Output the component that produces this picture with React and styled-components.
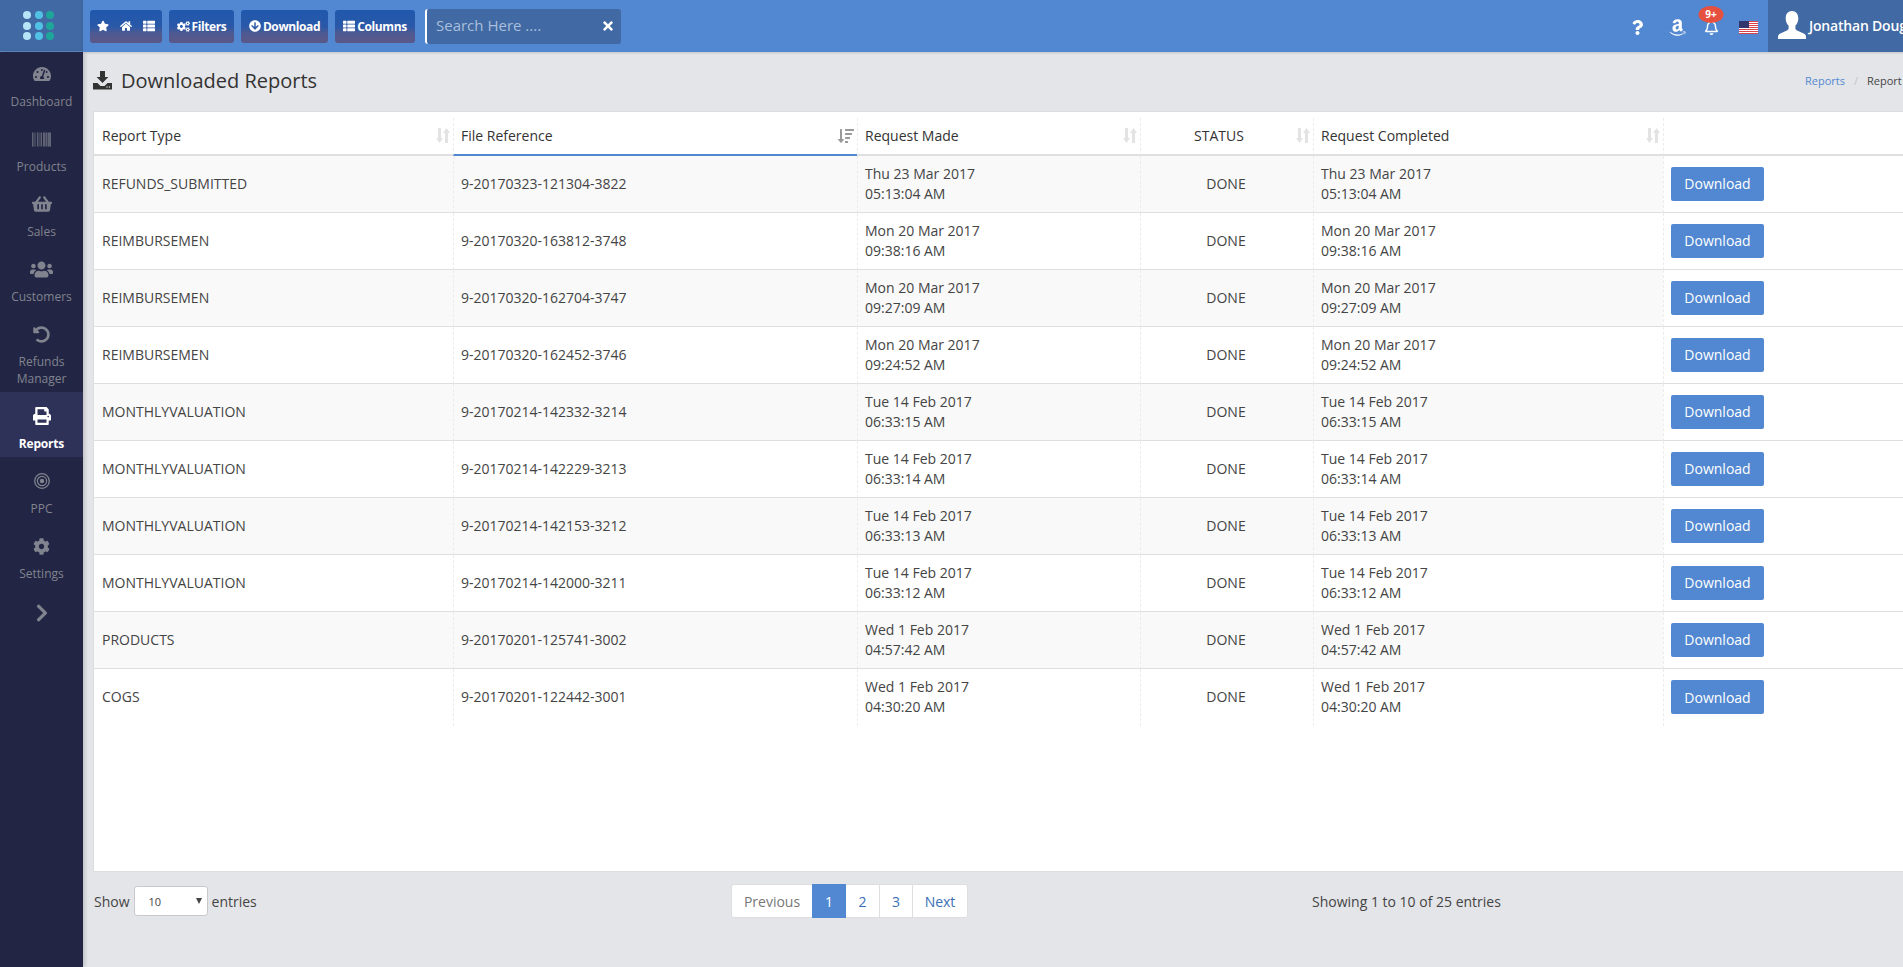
import React from "react";
import styled, { createGlobalStyle } from "styled-components";
import {
  FaStar,
  FaHome,
  FaThList,
  FaCogs,
  FaArrowCircleDown,
  FaTimes,
  FaQuestion,
  FaAmazon,
  FaRegBell,
  FaTachometerAlt,
  FaBarcode,
  FaShoppingBasket,
  FaUsers,
  FaUndoAlt,
  FaPrint,
  FaCog,
  FaChevronRight,
  FaSortAmountDown,
} from "react-icons/fa";

const GlobalStyle = createGlobalStyle`
  html, body {
    margin: 0;
    padding: 0;
    overflow: hidden;
    height: 100%;
    background-color: #e4e5e9;
    color: #444;
    font-family: "Open Sans", Arial, sans-serif;
    font-size: 14px;
  }
`;

const Shell = styled.div`
  display: grid;
  grid-template-columns: 83px 1fr;
  grid-template-rows: 52px 915px;
  width: 2010px;
  height: 967px;
`;

const LogoCell = styled.div`
  background-color: #4169a3;
  display: flex;
  align-items: center;
  justify-content: center;
  padding: 0 6px 0 0;
  border-bottom: 1px solid #5f8cc8;
  box-sizing: border-box;
`;

const LogoGrid = styled.div`
  display: grid;
  grid-template-columns: repeat(3, 8px);
  column-gap: 3.5px;
  row-gap: 2.5px;
`;

const LogoDot = styled.span`
  width: 8px;
  height: 8px;
  border-radius: 50%;
  background-color: ${(props) => props.color};
`;

const TopBar = styled.header`
  background-color: #5288d1;
  display: flex;
  align-items: center;
  padding-left: 7px;
  box-shadow: 0 1px 2px rgba(0, 0, 0, 0.15);
  position: relative;
  z-index: 2;
`;

const ToolButton = styled.button`
  height: 33px;
  width: ${(props) => props.width}px;
  margin-right: 7px;
  padding: 0;
  border: 0;
  border-radius: 3px;
  background: linear-gradient(to bottom, #1f58ad 0%, #2a58a8 50%, #4f5a90 72%, #5a5788 100%);
  color: #fff;
  font-family: inherit;
  font-size: 12px;
  font-weight: 700;
  letter-spacing: -0.4px;
  display: flex;
  align-items: center;
  justify-content: center;
  gap: ${(props) => props.gap || 2}px;

  svg {
    font-size: ${(props) => props.iconSize || 12}px;
  }
`;

const SearchBox = styled.div`
  width: 196px;
  height: 35px;
  margin-left: 3px;
  box-sizing: border-box;
  border-left: 2px solid #fff;
  border-radius: 3px;
  background-color: #4169a3;
  display: flex;
  align-items: center;
  justify-content: space-between;
  padding: 0 6px 2px 9px;
  color: #a9bfdc;
  font-size: 15px;

  svg {
    color: #fff;
    font-size: 14px;
    margin-top: 1px;
  }
`;

const TopRight = styled.div`
  margin-left: auto;
  display: flex;
  align-items: center;
  height: 100%;
  color: #fff;
`;

const TopIcon = styled.span`
  position: relative;
  display: flex;
  align-items: center;
  justify-content: center;
  width: ${(props) => props.width}px;
  font-size: ${(props) => props.size}px;
  padding-top: 2px;
`;

const Badge = styled.span`
  position: absolute;
  top: -12px;
  left: 50%;
  transform: translateX(-50%);
  width: 25px;
  height: 17px;
  border-radius: 50%;
  background-color: #e5503f;
  color: #fff;
  font-size: 10px;
  font-weight: 700;
  line-height: 17px;
  text-align: center;
`;

const UserCell = styled.div`
  width: 242px;
  height: 100%;
  background-color: #4169a3;
  display: flex;
  align-items: center;
  padding: 0 0 2px 10px;
  box-sizing: border-box;
  font-size: 14px;
  font-weight: 600;
  letter-spacing: -0.2px;
  gap: 3px;
`;

const SideBar = styled.nav`
  background-color: #222644;
  display: flex;
  flex-direction: column;
  position: relative;
  z-index: 1;
  box-shadow: 2px 0 4px rgba(0, 0, 0, 0.16);
`;

const NavItem = styled.a`
  display: flex;
  flex-direction: column;
  align-items: center;
  box-sizing: border-box;
  min-height: 65px;
  padding: ${(props) => props.pad}px 0 ${(props) => (props.tall ? 5 : 0)}px;
  background-color: ${(props) => (props.active ? "#2e3259" : "transparent")};
  color: ${(props) => (props.active ? "#fff" : "#81838f")};
  font-size: 12px;
  font-weight: ${(props) => (props.active ? 700 : 400)};
  line-height: 17px;
  text-align: center;
  letter-spacing: ${(props) => (props.active ? "-0.2px" : 0)};
`;

const NavIcon = styled.span`
  height: 20px;
  margin-bottom: 9px;
  display: flex;
  align-items: center;
  justify-content: center;
  font-size: ${(props) => props.size || 18}px;
`;

const ChevronItem = styled.div`
  color: #81838f;
  font-size: 20px;
  display: flex;
  justify-content: center;
  padding-top: 16px;
`;

const Main = styled.main`
  display: flex;
  flex-direction: column;
  padding: 0 0 0 10px;
  min-width: 0;
`;

const TitleRow = styled.div`
  height: 59px;
  display: flex;
  align-items: center;
  justify-content: space-between;
  padding-bottom: 2px;
  box-sizing: border-box;
`;

const PageTitle = styled.h1`
  margin: 0;
  font-size: 20px;
  font-weight: 400;
  color: #333;
  display: flex;
  align-items: center;
  gap: 9px;
`;

const Breadcrumbs = styled.div`
  width: 205px;
  font-size: 11px;
  color: #444;
  display: flex;
  gap: 9px;
`;

const CrumbLink = styled.span`
  color: #5288d1;
`;

const CrumbSep = styled.span`
  color: #c4c4c8;
`;

const TableCard = styled.div`
  height: 761px;
  box-sizing: border-box;
  background-color: #fff;
  border: 1px solid #dcdde0;
  border-right: 0;
  padding-top: 6px;
`;

const Table = styled.table`
  width: 100%;
  table-layout: fixed;
  border-collapse: separate;
  border-spacing: 0;
`;

const HeadCell = styled.th`
  position: relative;
  height: 38px;
  box-sizing: border-box;
  padding: 0 ${(props) => (props.center ? 23 : 7)}px 2px ${(props) => (props.first ? 8 : 7)}px;
  font-size: 14px;
  font-weight: 500;
  color: #333;
  text-align: ${(props) => (props.center ? "center" : "left")};
  border-bottom: 2px solid ${(props) => (props.sorted ? "#5288d1" : "#dfdfdf")};
  border-left: ${(props) => (props.first ? "0" : "1px dashed #ececec")};
`;

const SortMark = styled.span`
  position: absolute;
  right: 3px;
  top: 10px;
  display: flex;
  color: ${(props) => (props.sorted ? "#9a9a9a" : "#e3e3e3")};
  font-size: 16px;
`;

const BodyRow = styled.tr`
  background-color: ${(props) => (props.odd ? "#f9f9f9" : "#fff")};

  &:last-child td {
    border-bottom: 0;
  }
`;

const BodyCell = styled.td`
  height: 57px;
  box-sizing: border-box;
  padding: 0 ${(props) => (props.center ? 14 : 7)}px 1px ${(props) => (props.first ? 8 : 7)}px;
  font-size: 14px;
  line-height: 20px;
  color: #444;
  text-align: ${(props) => (props.center ? "center" : "left")};
  border-bottom: 1px solid #dfdfdf;
  border-left: ${(props) => (props.first ? "0" : "1px dashed #ececec")};
  background-color: ${(props) => (props.plain ? "#fff" : "transparent")};
`;

const StatusText = styled.span`
  padding-left: 5px;
`;

const DownloadButton = styled.button`
  width: 93px;
  height: 34px;
  border: 0;
  border-radius: 2px;
  background-color: #5288d1;
  color: #fff;
  font-family: inherit;
  font-size: 14px;
  padding: 0;
`;

const Footer = styled.div`
  display: grid;
  grid-template-columns: 638px 581px auto;
  align-items: center;
  padding-top: 12px;
  font-size: 14px;
  color: #444;
`;

const LengthControl = styled.div`
  display: flex;
  align-items: center;
  gap: 4px;
  padding-left: 1px;
`;

const FakeSelect = styled.div`
  width: 74px;
  height: 30px;
  box-sizing: border-box;
  border: 1px solid #c9c9cd;
  border-radius: 3px;
  background-color: #fff;
  display: flex;
  align-items: center;
  justify-content: space-between;
  padding: 0 5px 0 14px;
  font-size: 11px;
`;

const Caret = styled.span`
  width: 0;
  height: 0;
  border-left: 3px solid transparent;
  border-right: 3px solid transparent;
  border-top: 6px solid #444;
`;

const Pager = styled.div`
  display: flex;
  width: max-content;
  height: 34px;
  box-sizing: border-box;
  border: 1px solid #dedede;
  border-radius: 3px;
  background-color: #fff;
`;

const PageLink = styled.span`
  display: flex;
  align-items: center;
  justify-content: center;
  width: ${(props) => props.width}px;
  margin: ${(props) => (props.active ? "-1px 0" : "0")};
  background-color: ${(props) => (props.active ? "#5288d1" : "transparent")};
  color: ${(props) => (props.active ? "#fff" : props.muted ? "#777" : "#3a6fb5")};
  border-left: ${(props) => (props.divided ? "1px solid #dedede" : "0")};
  box-sizing: border-box;
  font-size: 14px;
`;

const SortArrows = () => (
  <svg width="14" height="15" viewBox="0 0 14 15" fill="currentColor">
    <path d="M2 0h3v10h2l-3.5 5L0 10h2z" />
    <path d="M9 15V5H7l3.5-5L14 5h-2v10z" />
  </svg>
);

const TrayDownload = () => (
  <svg width="19" height="19" viewBox="0 0 19 19" fill="#333">
    <path d="M7 0h5v6h3.4L9.5 12 3.6 6H7z" />
    <path d="M0 12h4.5l3 3h4l3-3H19v6.5H0z" />
    <circle cx="14" cy="16" r="0.7" fill="#e4e5e9" />
    <circle cx="16.4" cy="16" r="0.7" fill="#e4e5e9" />
  </svg>
);

const UsFlag = () => (
  <svg width="19" height="13" viewBox="0 0 19 13">
    <rect width="19" height="13" fill="#fff" />
    <rect width="19" height="1" fill="#d9424a" />
    <rect y="2" width="19" height="1" fill="#d9424a" />
    <rect y="4" width="19" height="1" fill="#d9424a" />
    <rect y="6" width="19" height="1" fill="#d9424a" />
    <rect y="8" width="19" height="1" fill="#d9424a" />
    <rect y="10" width="19" height="1" fill="#d9424a" />
    <rect y="12" width="19" height="1" fill="#d9424a" />
    <rect width="10" height="7" fill="#33356f" />
  </svg>
);

// head and shoulders silhouette, filled like the glyphicon in the header
const UserSilhouette = () => (
  <svg width="28" height="28" viewBox="0 0 28 28" fill="#fff">
    <path d="M14 0c3.9 0 6.3 3 6.3 7.2 0 3-1.1 5.8-2.9 7.5v2.6c0 1 .6 1.7 1.7 2.2l6.6 3c1.3.6 2.3 1.7 2.3 3V28H0v-2.5c0-1.3 1-2.4 2.3-3l6.6-3c1.1-.5 1.7-1.2 1.7-2.2v-2.6c-1.8-1.7-2.9-4.5-2.9-7.5C7.7 3 10.1 0 14 0z" />
  </svg>
);

const Rings = () => (
  <svg width="16" height="16" viewBox="0 0 16 16" fill="none" stroke="currentColor">
    <circle cx="8" cy="8" r="7.3" strokeWidth="1.3" />
    <circle cx="8" cy="8" r="4.6" strokeWidth="1.2" />
    <circle cx="8" cy="8" r="2.2" fill="currentColor" strokeWidth="0" />
  </svg>
);

const logoDots = ["#b5e5f7", "#52c1e6", "#1fa69b", "#b5e5f7", "#52c1e6", "#1fa69b", "#b5e5f7", "#52c1e6", "#1fa69b"];

const navItems = [
  { label: "Dashboard", icon: <FaTachometerAlt />, size: 18, pad: 12 },
  { label: "Products", icon: <FaBarcode />, size: 19, pad: 12 },
  { label: "Sales", icon: <FaShoppingBasket />, size: 20, pad: 12 },
  { label: "Customers", icon: <FaUsers />, size: 23, pad: 12 },
  { label: "Refunds Manager", icon: <FaUndoAlt />, size: 17, pad: 12, tall: true },
  { label: "Reports", icon: <FaPrint />, size: 18, pad: 14, active: true },
  { label: "PPC", icon: <Rings />, pad: 14 },
  { label: "Settings", icon: <FaCog />, size: 17, pad: 14 },
];

const columns = [
  { label: "Report Type", width: 359, first: true },
  { label: "File Reference", width: 404, sorted: true },
  { label: "Request Made", width: 283 },
  { label: "STATUS", width: 173, center: true },
  { label: "Request Completed", width: 350 },
  { label: "", width: undefined },
];

const reports = [
  ["REFUNDS_SUBMITTED", "9-20170323-121304-3822", "Thu 23 Mar 2017", "05:13:04 AM"],
  ["REIMBURSEMEN", "9-20170320-163812-3748", "Mon 20 Mar 2017", "09:38:16 AM"],
  ["REIMBURSEMEN", "9-20170320-162704-3747", "Mon 20 Mar 2017", "09:27:09 AM"],
  ["REIMBURSEMEN", "9-20170320-162452-3746", "Mon 20 Mar 2017", "09:24:52 AM"],
  ["MONTHLYVALUATION", "9-20170214-142332-3214", "Tue 14 Feb 2017", "06:33:15 AM"],
  ["MONTHLYVALUATION", "9-20170214-142229-3213", "Tue 14 Feb 2017", "06:33:14 AM"],
  ["MONTHLYVALUATION", "9-20170214-142153-3212", "Tue 14 Feb 2017", "06:33:13 AM"],
  ["MONTHLYVALUATION", "9-20170214-142000-3211", "Tue 14 Feb 2017", "06:33:12 AM"],
  ["PRODUCTS", "9-20170201-125741-3002", "Wed 1 Feb 2017", "04:57:42 AM"],
  ["COGS", "9-20170201-122442-3001", "Wed 1 Feb 2017", "04:30:20 AM"],
];

export default function App() {
  return (
    <>
      <GlobalStyle />
      <Shell>
        <LogoCell>
          <LogoGrid>
            {logoDots.map((color, index) => (
              <LogoDot key={index} color={color} />
            ))}
          </LogoGrid>
        </LogoCell>

        <TopBar>
          <ToolButton width={72} gap={11}>
            <FaStar />
            <FaHome />
            <FaThList />
          </ToolButton>
          <ToolButton width={65} iconSize={13}>
            <FaCogs />
            Filters
          </ToolButton>
          <ToolButton width={87}>
            <FaArrowCircleDown />
            Download
          </ToolButton>
          <ToolButton width={80}>
            <FaThList />
            Columns
          </ToolButton>
          <SearchBox>
            Search Here ....
            <FaTimes />
          </SearchBox>
          <TopRight>
            <TopIcon width={46} size={15}>
              <FaQuestion />
            </TopIcon>
            <TopIcon width={34} size={19}>
              <FaAmazon />
            </TopIcon>
            <TopIcon width={34} size={15}>
              <FaRegBell />
              <Badge>9+</Badge>
            </TopIcon>
            <TopIcon width={40} size={13}>
              <UsFlag />
            </TopIcon>
            <UserCell>
              <UserSilhouette />
              Jonathan Doug
            </UserCell>
          </TopRight>
        </TopBar>

        <SideBar>
          {navItems.map((item) => (
            <NavItem key={item.label} active={item.active} tall={item.tall} pad={item.pad}>
              <NavIcon size={item.size}>{item.icon}</NavIcon>
              <span>{item.label}</span>
            </NavItem>
          ))}
          <ChevronItem>
            <FaChevronRight />
          </ChevronItem>
        </SideBar>

        <Main>
          <TitleRow>
            <PageTitle>
              <TrayDownload />
              Downloaded Reports
            </PageTitle>
            <Breadcrumbs>
              <CrumbLink>Reports</CrumbLink>
              <CrumbSep>/</CrumbSep>
              <span>Report</span>
            </Breadcrumbs>
          </TitleRow>

          <TableCard>
            <Table>
              <colgroup>
                {columns.map((col, index) => (
                  <col key={index} style={col.width ? { width: col.width } : undefined} />
                ))}
              </colgroup>
              <thead>
                <tr>
                  {columns.map((col) => (
                    <HeadCell key={col.label} first={col.first} sorted={col.sorted} center={col.center}>
                      {col.label}
                      {col.label && (
                        <SortMark sorted={col.sorted}>
                          {col.sorted ? <FaSortAmountDown /> : <SortArrows />}
                        </SortMark>
                      )}
                    </HeadCell>
                  ))}
                </tr>
              </thead>
              <tbody>
                {reports.map((row, index) => (
                  <BodyRow key={row[1]} odd={index % 2 === 0}>
                    <BodyCell first>{row[0]}</BodyCell>
                    <BodyCell>{row[1]}</BodyCell>
                    <BodyCell>
                      {row[2]}
                      <br />
                      {row[3]}
                    </BodyCell>
                    <BodyCell center>
                      <StatusText>DONE</StatusText>
                    </BodyCell>
                    <BodyCell>
                      {row[2]}
                      <br />
                      {row[3]}
                    </BodyCell>
                    <BodyCell plain>
                      <DownloadButton>Download</DownloadButton>
                    </BodyCell>
                  </BodyRow>
                ))}
              </tbody>
            </Table>
          </TableCard>

          <Footer>
            <LengthControl>
              Show
              <FakeSelect>
                10
                <Caret />
              </FakeSelect>
              entries
            </LengthControl>
            <Pager>
              <PageLink width={80} muted>
                Previous
              </PageLink>
              <PageLink width={34} active>
                1
              </PageLink>
              <PageLink width={33}>2</PageLink>
              <PageLink width={33} divided>
                3
              </PageLink>
              <PageLink width={55} divided>
                Next
              </PageLink>
            </Pager>
            <span>Showing 1 to 10 of 25 entries</span>
          </Footer>
        </Main>
      </Shell>
    </>
  );
}
